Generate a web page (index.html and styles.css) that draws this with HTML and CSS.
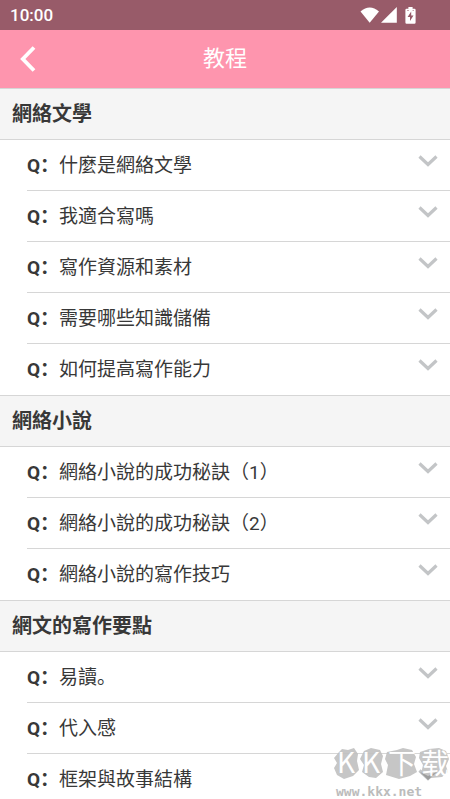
FILE: index.html
```html
<!DOCTYPE html>
<html lang="zh-CN">
<head>
<meta charset="utf-8">
<meta name="viewport" content="width=device-width, initial-scale=1">
<title>教程</title>
<link rel="stylesheet" href="styles.css">
</head>
<body>
<svg class="defs" aria-hidden="true"><symbol id="chevron" viewBox="0 0 20 12"><path d="M1.5 1.5 10 9.5 18.5 1.5" fill="none" stroke="currentColor" stroke-width="3.2"/></symbol></svg>
<div class="status">
  <span>10:00</span>
  <div class="status-icons">
    <svg width="20" height="16" viewBox="0 0 20 16"><path d="M.5 4.6Q9.7-3.4 19 4.6L9.7 15.8Z" fill="#fff"/></svg>
    <svg width="16" height="16" viewBox="0 0 16 16"><path d="M0 15.8 15.8 0V15.8Z" fill="#fff"/></svg>
    <svg class="battery" width="11" height="17" viewBox="0 0 11 17"><path d="M3.4 0H7.6V1.8H9.5Q10.6 1.8 10.6 3V15.5Q10.6 16.7 9.4 16.7H1.6Q.4 16.7 .4 15.5V3Q.4 1.8 1.5 1.8H3.4Z" fill="#fff"/><path d="M6.2 4.5 2.6 10H5V14L8.5 8.6H6.2Z" fill="#985b69"/><path d="M2 3.5H4M7.5 3.5H9" stroke="#c9a5ad"/></svg>
  </div>
</div>
<header class="bar">
  <button class="back" type="button" aria-label="返回"><svg width="16" height="26" viewBox="0 0 16 26"><path d="M14 1.5 2.8 13 14 24.5" fill="none" stroke="#fff" stroke-width="3.8"/></svg></button>
  <h1>教程</h1>
</header>
<main>
  <section>
    <h2>網絡文學</h2>
    <ul>
      <li><button type="button"><b>Q：</b><span>什麼是網絡文學</span><svg class="chev"><use href="#chevron"/></svg></button></li>
      <li><button type="button"><b>Q：</b><span>我適合寫嗎</span><svg class="chev"><use href="#chevron"/></svg></button></li>
      <li><button type="button"><b>Q：</b><span>寫作資源和素材</span><svg class="chev"><use href="#chevron"/></svg></button></li>
      <li><button type="button"><b>Q：</b><span>需要哪些知識儲備</span><svg class="chev"><use href="#chevron"/></svg></button></li>
      <li><button type="button"><b>Q：</b><span>如何提高寫作能力</span><svg class="chev"><use href="#chevron"/></svg></button></li>
    </ul>
  </section>
  <section>
    <h2>網絡小說</h2>
    <ul>
      <li><button type="button"><b>Q：</b><span>網絡小說的成功秘訣（1）</span><svg class="chev"><use href="#chevron"/></svg></button></li>
      <li><button type="button"><b>Q：</b><span>網絡小說的成功秘訣（2）</span><svg class="chev"><use href="#chevron"/></svg></button></li>
      <li><button type="button"><b>Q：</b><span>網絡小說的寫作技巧</span><svg class="chev"><use href="#chevron"/></svg></button></li>
    </ul>
  </section>
  <section>
    <h2>網文的寫作要點</h2>
    <ul>
      <li><button type="button"><b>Q：</b><span>易讀。</span><svg class="chev"><use href="#chevron"/></svg></button></li>
      <li><button type="button"><b>Q：</b><span>代入感</span><svg class="chev"><use href="#chevron"/></svg></button></li>
      <li><button type="button"><b>Q：</b><span>框架與故事結構</span><svg class="chev"><use href="#chevron"/></svg></button></li>
    </ul>
  </section>
</main>
<div class="mark">
  <svg width="117" height="38" viewBox="0 0 117 38" aria-hidden="true">
    <g fill="#c0c0c0"><path d="M6 5 9 2 15 3 21 1 25 7 24 14 26 23 20 29 11 32 4 28 1 21 4 16 1 11Z"/><path d="M31 4 38 1 47 3 50 9 48 17 50 25 43 31 36 30 29 25 31 18 27 12Z"/><path d="M54 5 64 3 70 1 79 3 83 10 81 17 84 25 77 29 66 32 53 28 55 18 52 12Z"/><path d="M87 5 96 2 106 1 113 4 116 12 113 19 115 25 109 30 98 31 88 27 90 18 86 11Z"/></g>
    <path d="M87 25 95 33 104 25 95 29Z" fill="#999"/>
    <g class="mark-text"><text x="4" y="26">K</text><text x="29" y="26">K</text><text x="55" y="27">下</text><text x="88" y="27">载</text></g>
  </svg>
  <span>www.kkx.net</span>
</div>
</body>
</html>
```
FILE: styles.css
```css
* { box-sizing: border-box; }
body {
  margin: 0;
  height: 100vh;
  overflow: hidden;
  position: relative;
  background: #fff;
  color: #383838;
  font-family: Roboto, "Noto Sans CJK SC", sans-serif;
}
.defs { position: absolute; width: 0; height: 0; }
h1, h2, ul { margin: 0; padding: 0; font-weight: 400; }
ul { list-style: none; }
button { border: 0; background: none; padding: 0; color: inherit; font: inherit; text-align: left; }

.status {
  display: flex;
  justify-content: space-between;
  align-items: center;
  height: 30px;
  padding: 0 34px 0 10px;
  background: #985b69;
  color: #fff;
  font-size: 17px;
  font-weight: 500;
}
.status-icons { display: flex; align-items: center; gap: 1px; }
.battery { margin-left: 7px; }

.bar {
  display: grid;
  grid-template-columns: 60px 1fr 60px;
  align-items: center;
  height: 58px;
  background: #fe95ae;
  color: #fff;
}
.back { display: flex; padding-left: 20px; }
.bar h1 { font-size: 22px; line-height: 32px; text-align: center; }

h2 {
  border: solid #d6d6d6;
  border-width: 1px 0;
  padding: 0 12px;
  background: #f5f5f5;
  font-size: 20px;
  font-weight: 700;
  line-height: 50px;
}
li { margin-left: 27px; border-bottom: 1px solid #d6d6d6; }
li:last-child { border-bottom: 0; padding-bottom: 1px; }
li button {
  display: flex;
  align-items: center;
  width: 100%;
  height: 50px;
  padding: 0 12px 4px 0;
  font-size: 19px;
}
li span { flex: 1; }
.chev { width: 20px; height: 12px; margin-bottom: 4px; color: #c3c5c7; }

.mark { position: absolute; right: 0; bottom: 0; width: 117px; opacity: .9; }
.mark svg { display: block; overflow: visible; }
.mark-text { fill: #fff; font-size: 28px; font-family: "Noto Sans CJK SC", sans-serif; }
.mark > span {
  display: block;
  padding-left: 3px;
  color: #b5b5b5;
  font: 700 13px/14px "DejaVu Sans Mono", monospace;
}
```
